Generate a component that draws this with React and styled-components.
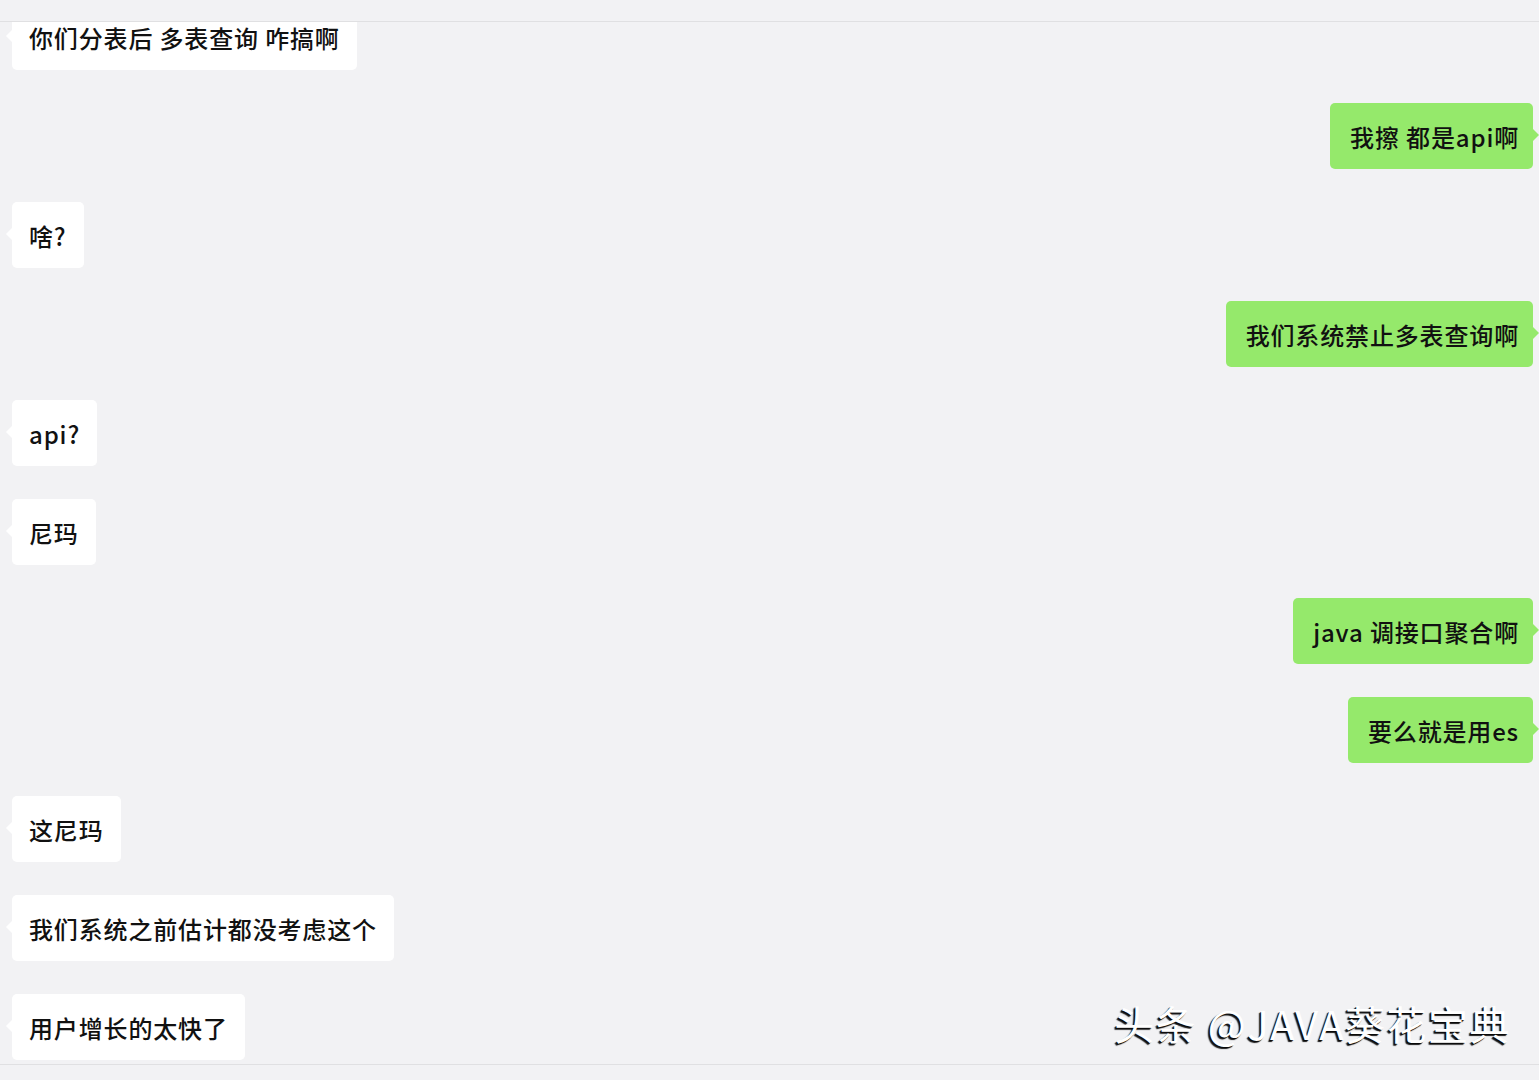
import styled, { createGlobalStyle } from "styled-components";

const GlobalStyle = createGlobalStyle`
  html, body {
    margin: 0;
    padding: 0;
    background: #f2f2f4;
  }
  * {
    box-sizing: border-box;
  }
`;

const messages = [
  { side: "left", text: "你们分表后 多表查询 咋搞啊" },
  { side: "right", text: "我擦 都是api啊" },
  { side: "left", text: "啥?" },
  { side: "right", text: "我们系统禁止多表查询啊" },
  { side: "left", text: "api?" },
  { side: "left", text: "尼玛" },
  { side: "right", text: "java 调接口聚合啊" },
  { side: "right", text: "要么就是用es" },
  { side: "left", text: "这尼玛" },
  { side: "left", text: "我们系统之前估计都没考虑这个" },
  { side: "left", text: "用户增长的太快了" },
];

const Page = styled.div`
  width: 1539px;
  height: 1080px;
  display: flex;
  flex-direction: column;
  background: #f2f2f4;
  font-family: "Noto Sans CJK SC", "Noto Sans", sans-serif;
  overflow: hidden;
`;

const Strip = styled.div`
  height: ${({ h }) => h}px;
  flex-shrink: 0;
  background: #f2f2f4;
  border-${({ edge }) => edge}: 1px solid #e0e0e2;
`;

const ChatArea = styled.div`
  position: relative;
  flex: 1;
  overflow: hidden;
`;

const MessageList = styled.div`
  display: flex;
  flex-direction: column;
  gap: 33px;
  margin-top: -18px;
  padding: 0 6px 0 12px;
`;

const Row = styled.div`
  display: flex;
  justify-content: ${({ side }) => (side === "right" ? "flex-end" : "flex-start")};
`;

const Bubble = styled.div`
  position: relative;
  height: 66px;
  display: flex;
  align-items: center;
  padding: ${({ side }) => (side === "right" ? "0 14px 0 20px" : "0 17px")};
  border-radius: 5px;
  background: ${({ side }) => (side === "right" ? "#95e96b" : "#ffffff")};
  color: #111;
  font-size: 24px;
  font-weight: 500;
  letter-spacing: 0.85px;
  white-space: nowrap;

  &::before {
    content: "";
    position: absolute;
    top: 26px;
    ${({ side }) => (side === "right" ? "right: -6px;" : "left: -6px;")}
    border-top: 6px solid transparent;
    border-bottom: 6px solid transparent;
    ${({ side }) =>
      side === "right"
        ? "border-left: 6px solid #95e96b;"
        : "border-right: 6px solid #ffffff;"}
  }
`;

const Watermark = styled.div`
  position: absolute;
  right: 28px;
  bottom: 12px;
  font-size: 40px;
  font-weight: 400;
  color: #ffffff;
  letter-spacing: 1.5px;
  text-shadow: -2px 2px 1px rgba(0, 0, 0, 0.9), -1px 1px 0 rgba(0, 0, 0, 0.7);
  white-space: nowrap;
`;

export default function App() {
  return (
    <Page>
      <GlobalStyle />
      <Strip h={22} edge="bottom" />
      <ChatArea>
        <MessageList>
          {messages.map((m, i) => (
            <Row key={i} side={m.side}>
              <Bubble side={m.side}>{m.text}</Bubble>
            </Row>
          ))}
        </MessageList>
        <Watermark>头条 @JAVA葵花宝典</Watermark>
      </ChatArea>
      <Strip h={16} edge="top" />
    </Page>
  );
}
